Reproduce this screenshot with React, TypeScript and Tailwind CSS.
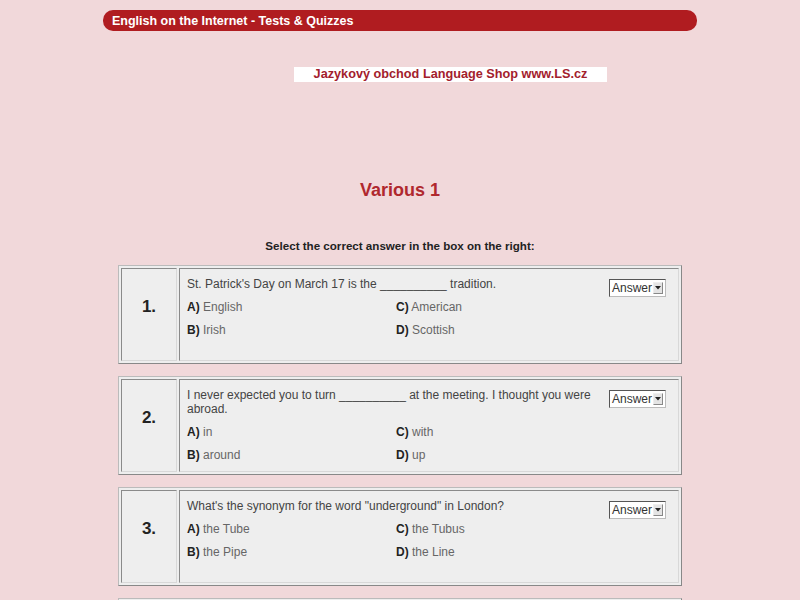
import React from "react";

type Question = {
	num: number;
	text: string;
	a: string;
	b: string;
	c: string;
	d: string;
};

const questions: Question[] = [
	{
		num: 1,
		text: "St. Patrick's Day on March 17 is the __________ tradition.",
		a: "English",
		b: "Irish",
		c: "American",
		d: "Scottish",
	},
	{
		num: 2,
		text: "I never expected you to turn __________ at the meeting. I thought you were abroad.",
		a: "in",
		b: "around",
		c: "with",
		d: "up",
	},
	{
		num: 3,
		text: 'What\'s the synonym for the word "underground" in London?',
		a: "the Tube",
		b: "the Pipe",
		c: "the Tubus",
		d: "the Line",
	},
	{
		num: 4,
		text: "",
		a: "",
		b: "",
		c: "",
		d: "",
	},
];

function Option({ label, text }: { label: string; text: string }) {
	return (
		<div className="text-[12px] leading-[14px]">
			<span className="font-bold text-[#222]">{label})</span>{" "}
			<span className="text-[#666]">{text}</span>
		</div>
	);
}

function AnswerBox() {
	return (
		<div className="flex h-[18px] w-[57px] items-center justify-between border border-t-[#555] border-l-[#555] border-b-[#bbb] border-r-[#bbb] bg-white pl-[2px] pr-[2px]">
			<span className="text-[12px] leading-[14px] text-[#333]">Answer</span>
			<span className="flex h-[12px] w-[10px] items-center justify-center border border-t-[#eee] border-l-[#eee] border-b-[#888] border-r-[#888] bg-[#e4e4e4]">
				<svg width="6" height="4" viewBox="0 0 6 4">
					<path d="M0 0 L6 0 L3 3.5 Z" fill="#222" />
				</svg>
			</span>
		</div>
	);
}

function QuestionBox({ q }: { q: Question }) {
	return (
		<div className="mb-[12px] flex h-[99px] w-[564px] gap-[2px] border border-t-[#bbb] border-l-[#bbb] border-b-[#888] border-r-[#888] bg-[#eeeeee] p-[2px]">
			<div className="flex w-[56px] justify-center border border-t-[#8a8a8a] border-l-[#8a8a8a] border-b-[#d8d8d8] border-r-[#d8d8d8] pt-[28px]">
				<span className="text-[17px] font-bold leading-[20px] text-[#222]">
					{q.text ? `${q.num}.` : ""}
				</span>
			</div>
			<div className="flex flex-1 border border-t-[#8a8a8a] border-l-[#8a8a8a] border-b-[#d8d8d8] border-r-[#d8d8d8] pl-[7px] pt-[8px]">
				{q.text && (
					<>
						<div className="w-[413px]">
							<div className="text-[12px] leading-[14px] text-[#444]">{q.text}</div>
							<div className="mt-[9px] grid grid-cols-[209px_1fr] gap-y-[9px]">
								<Option label="A" text={q.a} />
								<Option label="C" text={q.c} />
								<Option label="B" text={q.b} />
								<Option label="D" text={q.d} />
							</div>
						</div>
						<div className="ml-[9px] pt-[2px]">
							<AnswerBox />
						</div>
					</>
				)}
			</div>
		</div>
	);
}

export default function App() {
	return (
		<div className="min-h-screen overflow-hidden bg-[#f1d8da] font-['Liberation_Sans',Arial,sans-serif]">
			<div className="pt-[10px]">
				<div className="mx-auto flex h-[21px] w-[594px] items-center rounded-[10px] bg-[#b01c20] pl-[9px] pt-[1px]">
					<span className="text-[12.5px] font-bold text-white">
						English on the Internet - Tests &amp; Quizzes
					</span>
				</div>
			</div>

			<div className="ml-[294px] mt-[36px] flex h-[15px] w-[313px] items-center justify-center bg-white">
				<span className="text-[12.7px] font-bold text-[#a3202c]">
					Jazykový obchod Language Shop www.LS.cz
				</span>
			</div>

			<h1 className="mt-[97px] text-center text-[18px] font-bold leading-[22px] text-[#b0282e]">
				Various 1
			</h1>

			<p className="mt-[38px] text-center text-[11.6px] font-bold leading-[14px] text-[#222]">
				Select the correct answer in the box on the right:
			</p>

			<div className="mt-[12px] flex flex-col items-center">
				{questions.map((q) => (
					<QuestionBox key={q.num} q={q} />
				))}
			</div>
		</div>
	);
}
